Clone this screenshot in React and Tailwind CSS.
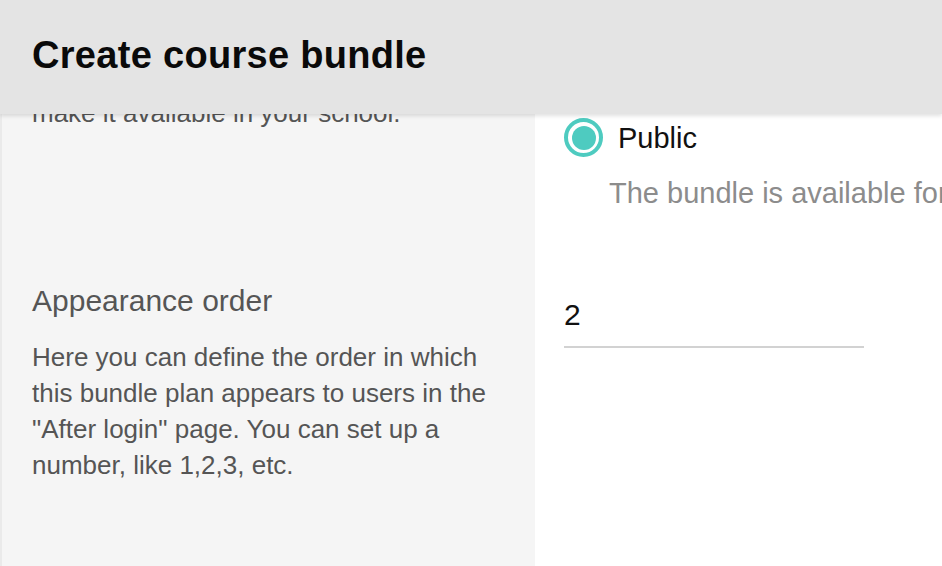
import React from "react";

function Radio({ checked, label }) {
  return (
    <div className="flex items-center gap-[15px]">
      <span
        className={`flex h-[39px] w-[39px] items-center justify-center rounded-full border-[4.5px] ${
          checked ? "border-[#4ecbc0]" : "border-[#c8c8c8]"
        }`}
      >
        {checked && <span className="h-[24px] w-[24px] rounded-full bg-[#4ecbc0]" />}
      </span>
      <span className="text-[29px] leading-[36px] text-[#111]">{label}</span>
    </div>
  );
}

function SettingRow({ title, children, aside, className = "", leftPad = "", rightPad = "" }) {
  return (
    <div className={`flex ${className}`}>
      <div className={`w-[535px] shrink-0 border-l-2 border-[#eaeaea] bg-[#f5f5f5] pl-[30px] pr-[30px] ${leftPad}`}>
        <h3 className="text-[30px] leading-[36px] text-[#555]">{title}</h3>
        <p className="mt-[20px] text-[26px] leading-[36px] text-[#555]">{children}</p>
      </div>
      <div className={`min-w-0 flex-1 overflow-hidden bg-white pl-[29px] ${rightPad}`}>{aside}</div>
    </div>
  );
}

export default function App() {
  return (
    <div className="relative h-[566px] w-[942px] overflow-hidden bg-white font-['Liberation_Sans',Arial,sans-serif]">
      <div className="flex h-full flex-col">
        <SettingRow
          title="Visibility"
          className="h-[250px]"
          leftPad="pt-[3px]"
          aside={
            <div className="pt-[40px]">
              <Radio label="Private" />
              <div className="mt-[39px]">
                <Radio checked label="Public" />
              </div>
              <p className="ml-[45px] mt-[18px] whitespace-nowrap text-[29px] leading-[36px] text-[#8c8c8c]">
                The bundle is available for everyone in your school.
              </p>
            </div>
          }
        >
          Choose whether to hide this bundle or
          <br />
          make it available in your school.
        </SettingRow>

        <SettingRow
          title="Appearance order"
          className="flex-1"
          leftPad="pt-[33px]"
          aside={
            <div className="pt-[34px]">
              <input
                readOnly
                value="2"
                className="h-[64px] w-[300px] border-b-2 border-[#d2d2d2] bg-transparent text-[30px] text-[#111] outline-none"
              />
            </div>
          }
        >
          Here you can define the order in which this bundle plan appears to users in the "After
          login" page. You can set up a number, like 1,2,3, etc.
        </SettingRow>
      </div>

      <header className="absolute left-0 right-0 top-0 h-[114px] bg-[#e4e4e4] pl-[32px] pt-[35px] shadow-[0_2px_4px_rgba(0,0,0,0.12)]">
        <h1 className="text-[38px] font-bold leading-[40px] tracking-[0.3px] text-[#0a0a0a]">
          Create course bundle
        </h1>
      </header>
    </div>
  );
}
